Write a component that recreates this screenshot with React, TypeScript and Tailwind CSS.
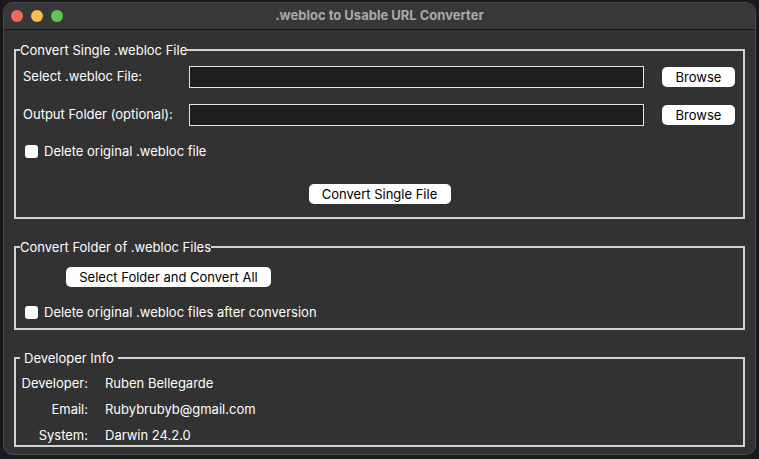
import type { ReactNode } from "react";

const FONT = { fontFamily: "Inter, 'Liberation Sans', sans-serif" };

function Group({ title, padded, children }: { title: string; padded?: boolean; children: ReactNode }) {
  return (
    <fieldset className="mx-[10px] border-2 border-[#d2d2d2] px-0 min-w-0">
      <legend className={`ml-[4px] text-[13px] leading-[16px] text-white ${padded ? "px-[4px]" : "px-0"}`}>
        {title}
      </legend>
      {children}
    </fieldset>
  );
}

function Btn({ children, className = "" }: { children: ReactNode; className?: string }) {
  return (
    <button className={`h-[20px] rounded-[5px] bg-white text-[13px] leading-[20px] text-black ${className}`}>
      {children}
    </button>
  );
}

function Check({ label }: { label: string }) {
  return (
    <label className="flex items-center gap-[6px] pl-[9px] text-[13px] leading-[16px] text-white">
      <span className="h-[13px] w-[13px] rounded-[3px] bg-white" />
      {label}
    </label>
  );
}

function FileRow({ label, className = "" }: { label: string; className?: string }) {
  return (
    <div className={`flex items-center ${className}`}>
      <span className="w-[173px] pl-[7px] text-[13px] text-white">{label}</span>
      <div className="h-[22px] w-[455px] border border-[#e6e6e6] bg-[#1e1e1e]" />
      <Btn className="ml-[18px] w-[73px]">Browse</Btn>
    </div>
  );
}

export default function App() {
  return (
    <div className="h-[459px] w-[759px] bg-[#17191c] pl-[3px] pt-[2px]" style={FONT}>
      <div className="h-[453px] w-[753px] overflow-hidden rounded-[10px] border border-[#4b4b4b] bg-[#323232]">
        <div className="relative flex h-[27px] items-center justify-center border-b border-[#141414] bg-[#383838]">
          <div className="absolute left-[7px] top-[7px] flex gap-[8px]">
            <span className="h-[12px] w-[12px] rounded-full bg-[#ed6a5e]" />
            <span className="h-[12px] w-[12px] rounded-full bg-[#f5bf4f]" />
            <span className="h-[12px] w-[12px] rounded-full bg-[#61c554]" />
          </div>
          <span className="text-[13px] font-bold text-[#a9a9a9]">.webloc to Usable URL Converter</span>
        </div>

        <div className="pt-[12px]">
          <Group title="Convert Single .webloc File">
            <FileRow label="Select .webloc File:" className="mt-[8px]" />
            <FileRow label="Output Folder (optional):" className="mt-[16px]" />
            <div className="mt-[17px]">
              <Check label="Delete original .webloc file" />
            </div>
            <div className="mt-[25px] flex justify-center pb-[13px]">
              <Btn className="w-[142px]">Convert Single File</Btn>
            </div>
          </Group>

          <div className="mt-[20px]">
            <Group title="Convert Folder of .webloc Files">
              <Btn className="ml-[50px] mt-[12px] w-[205px]">Select Folder and Convert All</Btn>
              <div className="mt-[16px] pb-[8px]">
                <Check label="Delete original .webloc files after conversion" />
              </div>
            </Group>
          </div>

          <div className="mt-[20px]">
            <Group title="Developer Info" padded>
              <div className="mt-[8px] flex flex-col gap-[8px] pb-[1px] text-[13px] leading-[18px] text-white">
                {[
                  ["Developer:", "Ruben Bellegarde"],
                  ["Email:", "Rubybrubyb@gmail.com"],
                  ["System:", "Darwin 24.2.0"],
                ].map(([k, v]) => (
                  <div key={k} className="flex">
                    <span className="w-[72px] text-right">{k}</span>
                    <span className="ml-[17px]">{v}</span>
                  </div>
                ))}
              </div>
            </Group>
          </div>
        </div>
      </div>
    </div>
  );
}
